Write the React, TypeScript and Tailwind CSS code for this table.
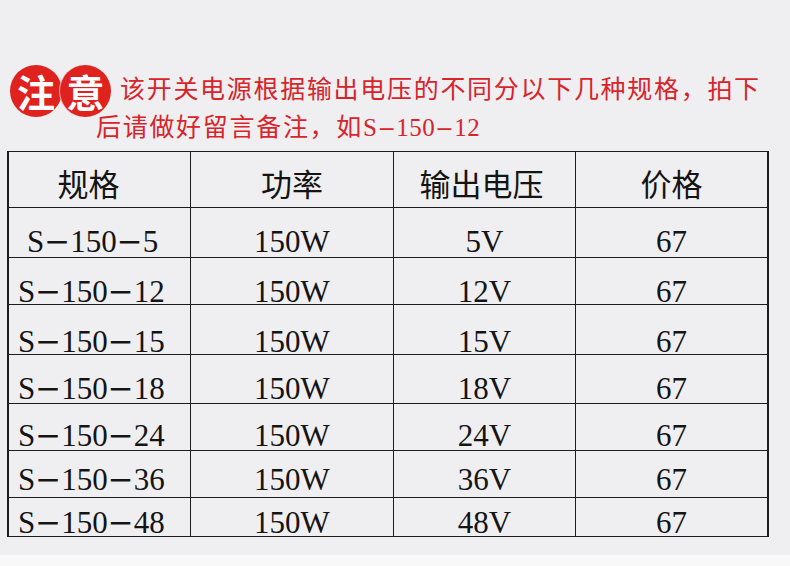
import React from "react";

const rows = [
  { spec: "5", v: "5V", row: "h-[50px]", cell: "pb-[5px]", first: "pl-[18px]" },
  { spec: "12", v: "12V", row: "h-[47px]", cell: "pb-[2px]", first: "pl-[9px]" },
  { spec: "15", v: "15V", row: "h-[50px]", cell: "pb-[2px]", first: "pl-[9px]" },
  { spec: "18", v: "18V", row: "h-[49px]", cell: "pb-[4px]", first: "pl-[9px]" },
  { spec: "24", v: "24V", row: "h-[47px]", cell: "pb-[4px]", first: "pl-[9px]" },
  { spec: "36", v: "36V", row: "h-[47px]", cell: "pb-[7px]", first: "pl-[9px]" },
  { spec: "48", v: "48V", row: "h-[39px]", cell: "pb-[3px]", first: "pl-[9px]" },
];

const Dash = () => <span className="font-['DejaVu_Serif',serif]">−</span>;

const Circle = ({ children, extra }: { children: React.ReactNode; extra?: string }) => (
  <div
    className={
      "w-[52px] h-[52px] rounded-full bg-[#e0221f] text-white flex items-center justify-center text-[38px] font-bold leading-none font-['Noto_Sans_CJK_SC','Noto_Sans',sans-serif] " +
      (extra ?? "")
    }
  >
    {children}
  </div>
);

export default function App() {
  return (
    <div className="w-[790px] h-[566px] bg-[#efeff1] flex flex-col overflow-hidden">
      <div className="flex-1">
        {/* Notice */}
        <div className="pt-[65px] pl-[10px] flex items-center">
          <div className="flex">
            <Circle>注</Circle>
            <Circle extra="-ml-[3px] border-l border-[#f3b5b5]">意</Circle>
          </div>
          <div className="ml-[9px] -mt-[7px] text-[25px] tracking-[1.7px] text-[#d8242b] leading-none whitespace-nowrap font-['Noto_Sans_CJK_SC','Noto_Sans',sans-serif]">
            该开关电源根据输出电压的不同分以下几种规格，拍下
          </div>
        </div>
        <div className="pl-[96px] -mt-[7px] text-[25px] tracking-[1.7px] text-[#d8242b] leading-[30px] whitespace-nowrap flex items-baseline">
          <span className="font-['Noto_Sans_CJK_SC','Noto_Sans',sans-serif]">后请做好留言备注，如</span>
          <span className="tracking-[0.5px] font-['Liberation_Serif','Times_New_Roman',serif]">
            S<span className="text-[22px] font-['DejaVu_Serif',serif]">−</span>150
            <span className="text-[22px] font-['DejaVu_Serif',serif]">−</span>12
          </span>
        </div>

        {/* Table */}
        <div className="mt-[7px] ml-[7px] w-[762px] border-l-[2.5px] border-r-[2.5px] border-t-[1.5px] border-[#1c1c1c] text-[#141414]">
          <div className="grid grid-cols-[182px_203px_182px_1fr] h-[56px] border-b-[1.5px] border-[#1c1c1c] text-[31px] font-['Noto_Sans_CJK_SC','Noto_Sans',sans-serif]">
            <div className="border-r-[1.5px] border-[#1c1c1c] flex items-center justify-center pt-[8px] pr-[22px]">规格</div>
            <div className="border-r-[1.5px] border-[#1c1c1c] flex items-center justify-center pt-[8px]">功率</div>
            <div className="border-r-[1.5px] border-[#1c1c1c] flex items-center justify-center pt-[8px] pr-[6px]">输出电压</div>
            <div className="flex items-center justify-center pt-[8px]">价格</div>
          </div>
          {rows.map((r, i) => (
            <div
              key={i}
              className={
                "grid grid-cols-[182px_203px_182px_1fr] border-b-[1.5px] border-[#1c1c1c] text-[31px] font-['Liberation_Serif','Times_New_Roman',serif] " +
                r.row
              }
            >
              <div className={"border-r-[1.5px] border-[#1c1c1c] flex items-end " + r.cell + " " + r.first}>
                <span className="leading-[20px] whitespace-nowrap">
                  S<Dash />150<Dash />{r.spec}
                </span>
              </div>
              <div className={"border-r-[1.5px] border-[#1c1c1c] flex items-end justify-center " + r.cell}>
                <span className="leading-[20px]">150W</span>
              </div>
              <div className={"border-r-[1.5px] border-[#1c1c1c] flex items-end justify-center " + r.cell}>
                <span className="leading-[20px]">{r.v}</span>
              </div>
              <div className={"flex items-end justify-center " + r.cell}>
                <span className="leading-[20px]">67</span>
              </div>
            </div>
          ))}
        </div>
      </div>
      <div className="h-[11px] bg-[#f8f8f9]" />
    </div>
  );
}
